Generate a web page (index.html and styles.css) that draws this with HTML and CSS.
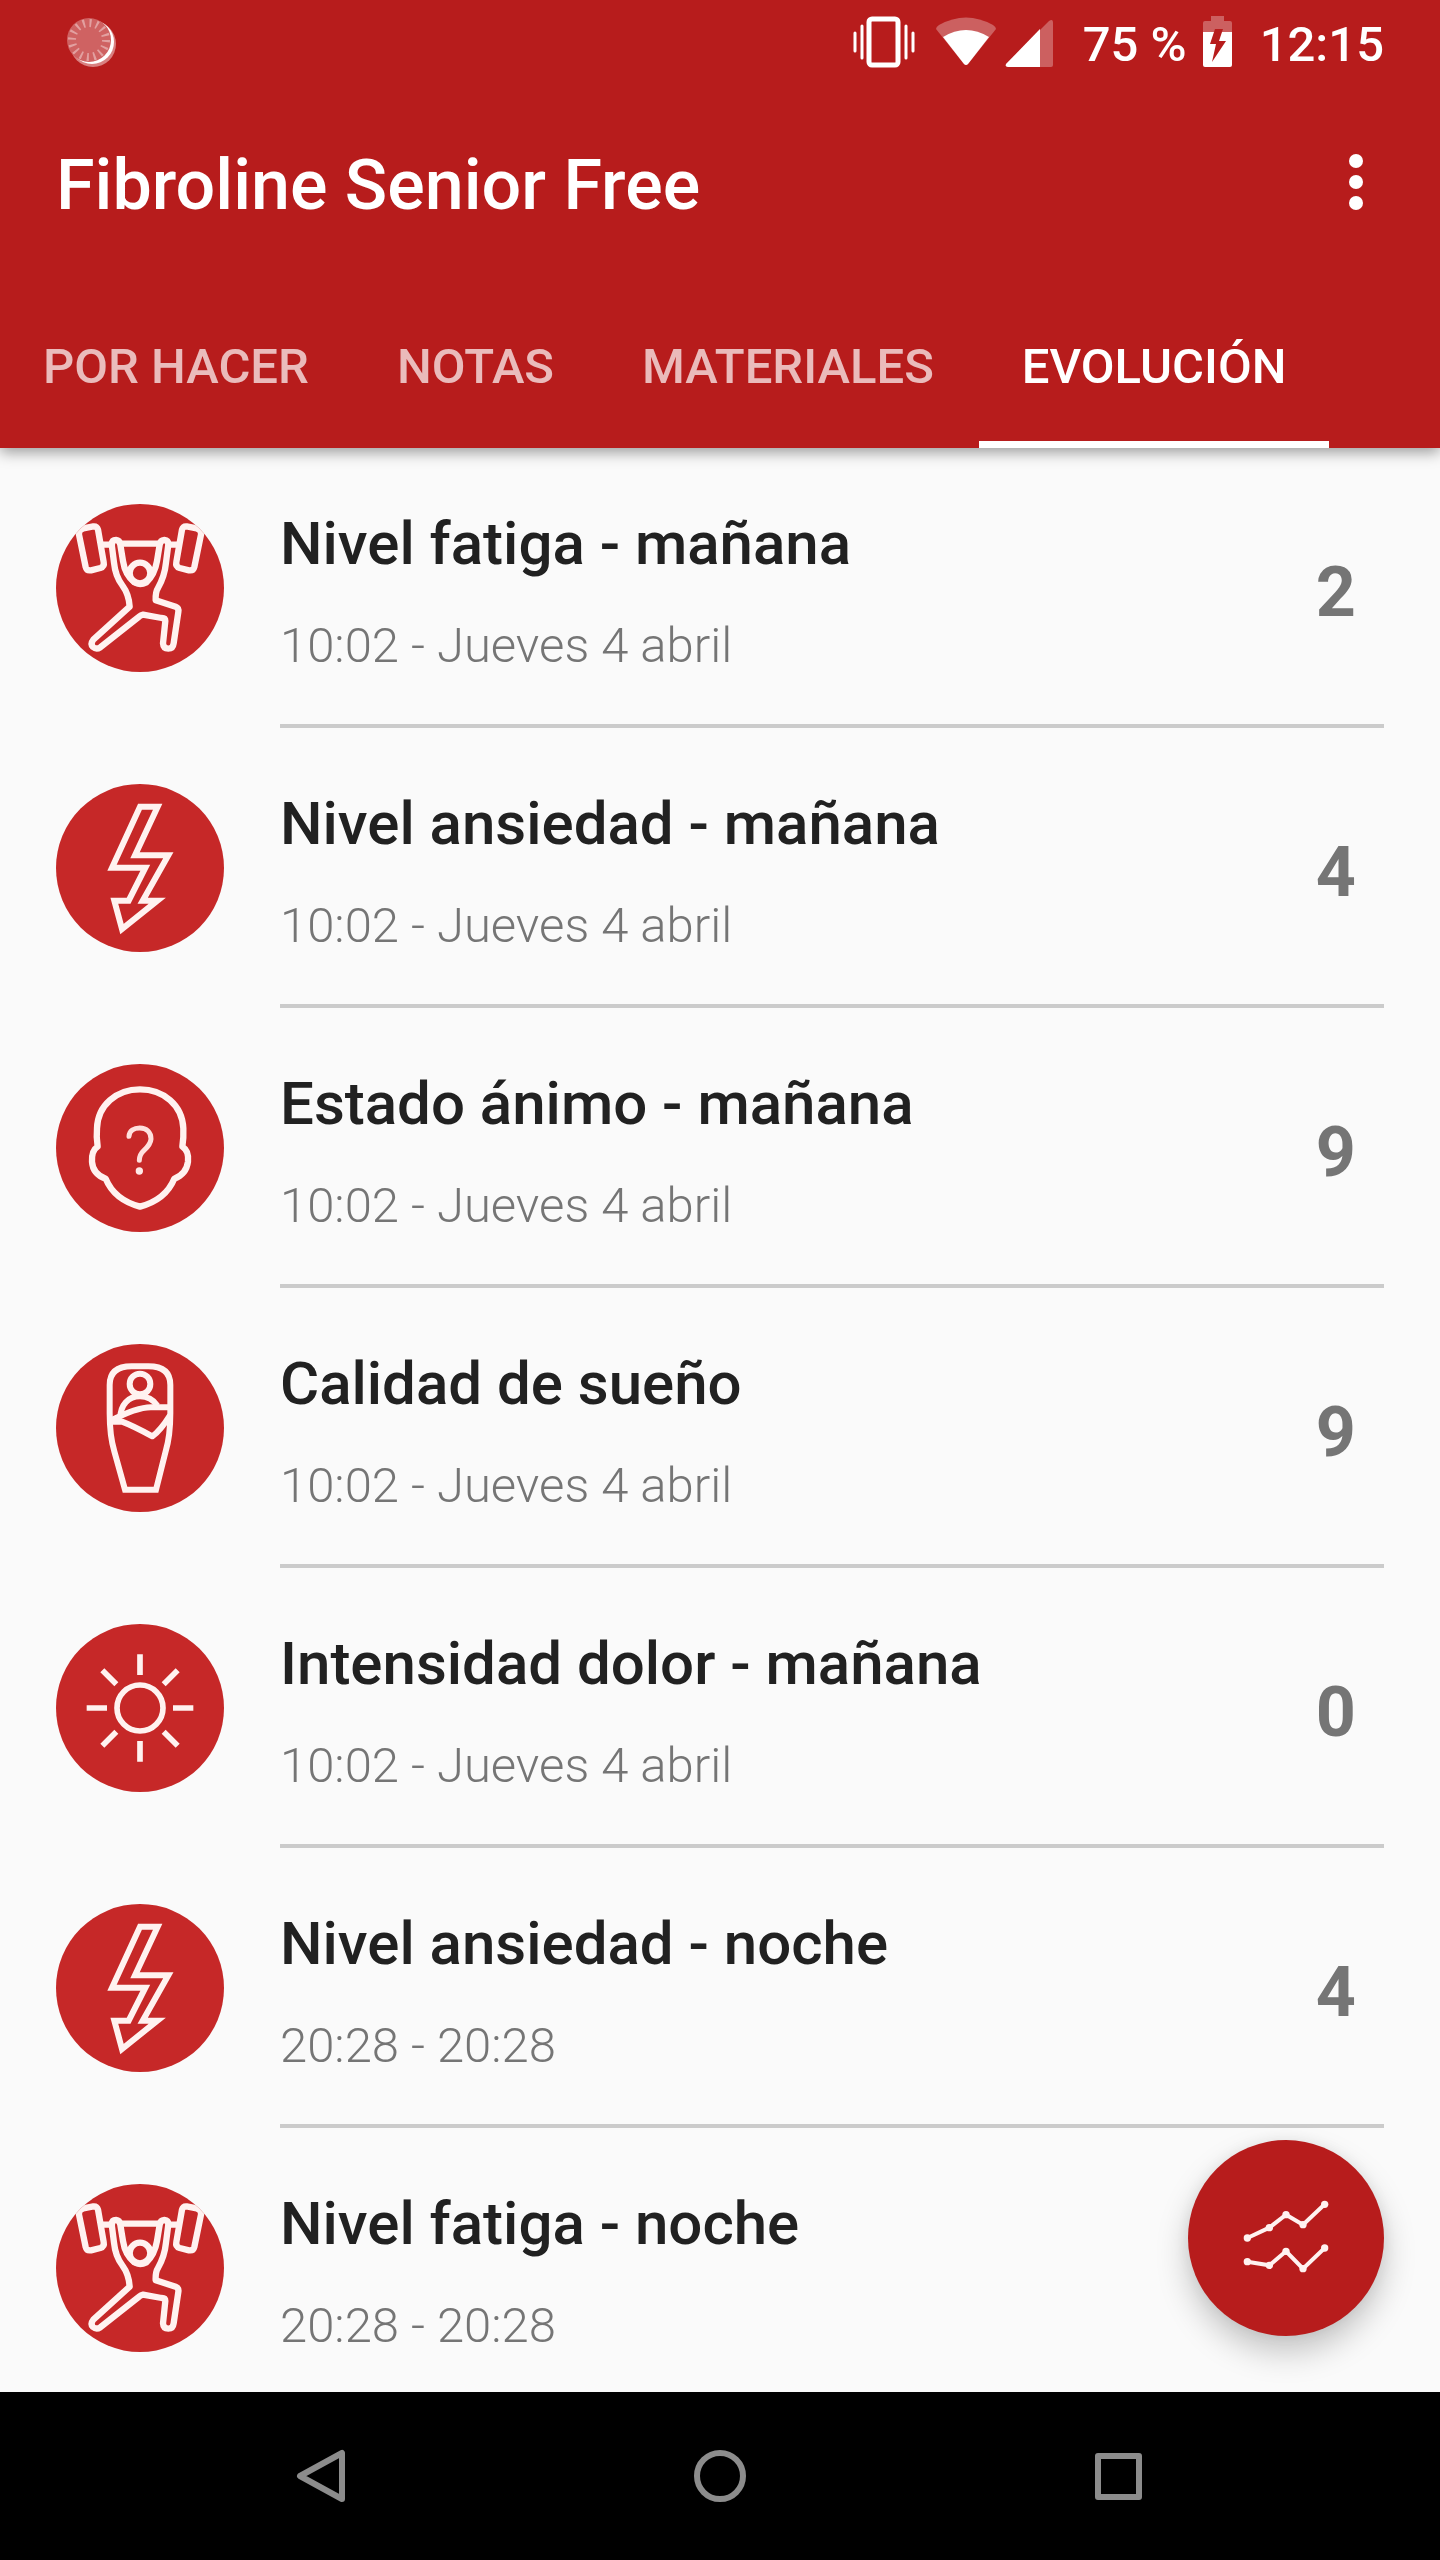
FILE: index.html
```html
<!DOCTYPE html>
<html lang="es">
<head>
<meta charset="utf-8">
<meta name="viewport" content="width=device-width, initial-scale=1">
<title>Fibroline Senior Free</title>
<link rel="stylesheet" href="styles.css">
</head>
<body>
<svg class="sprite" aria-hidden="true">
  <symbol id="i-fatiga" viewBox="48 42 504 504">
    <g fill="none" stroke="#fff2f0" stroke-width="19" stroke-linejoin="round" stroke-linecap="round">
      <path d="M130 115L160 109Q171 108 174 119L191 216Q194 230 181 234L153 241Q140 243 137 231L117 134Q114 119 130 115Z"/>
      <path d="M470 115L440 109Q429 108 426 119L409 216Q406 230 419 234L447 241Q460 243 463 231L483 134Q486 119 470 115Z"/>
      <path d="M190 164H216M245 161H356M386 164H412"/>
      <circle cx="300" cy="249" r="31"/>
      <path d="M269 350Q267 313 247 286Q226 259 222 218L215 163Q216 150 228 150Q239 151 241 164L249 213Q255 254 283 277Q300 287 319 277Q344 254 351 213L359 164Q361 151 373 150Q385 151 385 163L378 218Q374 259 354 294Q346 306 347 331L407 350Q417 354 415 366L401 460Q399 476 385 476Q370 476 369 460L376 393Q376 384 365 384L309 374Q303 375 297 380L181 472Q169 480 159 471Q150 462 160 449Z"/>
    </g>
  </symbol>
  <symbol id="i-ansiedad" viewBox="48 42 504 504">
    <path d="M300 110H353L285 256H385L308 392H352L246 477L223 392H266L316 293H216Z" fill="none" stroke="#fff2f0" stroke-width="18"/>
  </symbol>
  <symbol id="i-animo" viewBox="48 42 504 504">
    <path d="M173 290C170 270 169 255 171 235C173 165 230 118 300 118C370 118 427 165 430 235C431 255 430 270 427 290C440 298 446 315 444 335C440 365 425 378 403 386C385 430 345 458 300 470C255 458 215 430 197 386C175 378 158 365 156 335C155 315 160 298 173 290Z" fill="none" stroke="#fff2f0" stroke-width="19" stroke-linejoin="round"/>
    <path d="M267 259C268 242 282 234 299 234C320 234 333 247 333 267C332 282 322 292 312 301C301 311 298 318 298 331" fill="none" stroke="#ffe0de" stroke-width="15" stroke-linecap="round"/>
    <circle cx="298" cy="363" r="11" fill="#ffe9e7"/>
  </symbol>
  <symbol id="i-sueno" viewBox="48 42 504 504">
    <g fill="none" stroke="#fff2f0" stroke-width="18">
      <path d="M255 479L223 364Q209 318 209 250V165C209 125 235 109 275 109H325C365 109 391 125 391 165V250Q391 318 377 364L348 479Z"/>
      <circle cx="300" cy="162" r="31"/>
      <path d="M241 264C241 225 265 199 300 199C325 199 341 211 352 227"/>
      <path d="M210 273Q297 228 340 232H390M210 275H246Q278 287 337 319Q361 302 390 256" stroke-linejoin="round"/>
    </g>
  </symbol>
  <symbol id="i-dolor" viewBox="48 42 504 504">
    <g fill="none" stroke="#fff2f0" stroke-width="17">
      <circle cx="300" cy="294" r="69"/>
      <path d="M300 133V195M300 393V455M140 294H201M399 294H460M187 181L229 223M413 181L371 223M187 407L229 365M413 407L371 365"/>
    </g>
  </symbol>
</svg>

<header class="top">
  <div class="status">
    <svg class="status-sync" viewBox="0 0 50 50" aria-hidden="true">
      <circle cx="27" cy="27" r="23" fill="#d98080"/>
      <circle cx="26" cy="25" r="22" fill="#fff"/>
      <circle cx="23" cy="23" r="22" fill="#cf6262"/>
      <circle cx="23" cy="23" r="17" fill="none" stroke="#e2a0a0" stroke-width="8" stroke-dasharray="2 4.676"/>
    </svg>
    <div class="status-net">
      <svg width="62" height="52" viewBox="853 16 62 52" aria-label="Vibración">
        <rect x="869" y="19" width="29" height="46" rx="3" fill="none" stroke="#fff" stroke-width="5"/>
        <path d="M855 33V51M862 26V58M906 26V58M913 33V51" stroke="#fff" stroke-width="3" stroke-linecap="round"/>
      </svg>
      <span class="signals">
        <svg width="62" height="52" viewBox="935 16 62 52" aria-label="Wifi">
          <path d="M936 29Q936 27 939 25Q966 10 993 25Q996 27 996 29L968 64Q966 66 964 64Z" fill="#fff" fill-opacity=".3"/>
          <path d="M943 37Q966 23 989 37L968 64Q966 66 964 64Z" fill="#fff"/>
        </svg>
        <svg width="48" height="52" viewBox="1005 16 48 52" aria-label="Cobertura">
          <path d="M1006 64L1049 21Q1053 18 1053 23V65Q1053 67 1051 67H1008Q1005 67 1006 64Z" fill="#fff" fill-opacity=".3"/>
          <path d="M1006 64L1040 29V67H1008Q1005 67 1006 64Z" fill="#fff"/>
        </svg>
      </span>
    </div>
    <span>75 %</span>
    <svg width="29" height="52" viewBox="1203 16 29 52" aria-label="Cargando">
      <path d="M1211 16H1224V21H1230Q1232 21 1232 23V32H1203V23Q1203 21 1205 21H1211Z" fill="#fff" fill-opacity=".3"/>
      <path d="M1203 32H1232V65Q1232 67 1230 67H1205Q1203 67 1203 65Z" fill="#fff"/>
      <path d="M1215 29H1223L1219 41H1226L1212 62L1216 44H1210Z" fill="#b71c1c"/>
    </svg>
    <time class="clock">12:15</time>
  </div>
  <div class="appbar">
    <h1>Fibroline Senior Free</h1>
    <button class="more" type="button" aria-label="Más opciones">
      <svg width="14" height="56" viewBox="0 0 14 56"><g fill="#fff"><circle cx="7" cy="7" r="7"/><circle cx="7" cy="28" r="7"/><circle cx="7" cy="49" r="7"/></g></svg>
    </button>
  </div>
  <nav class="tabs">
    <button type="button">POR HACER</button>
    <button type="button">NOTAS</button>
    <button type="button">MATERIALES</button>
    <button type="button" class="active" aria-current="page">EVOLUCIÓN</button>
  </nav>
</header>

<main class="content">
  <ul class="list">
    <li><svg class="avatar"><use href="#i-fatiga"/></svg><div class="entry"><div class="text"><h2>Nivel fatiga - mañana</h2><p>10:02 - Jueves 4 abril</p></div><span class="value">2</span></div></li>
    <li><svg class="avatar"><use href="#i-ansiedad"/></svg><div class="entry"><div class="text"><h2>Nivel ansiedad - mañana</h2><p>10:02 - Jueves 4 abril</p></div><span class="value">4</span></div></li>
    <li><svg class="avatar"><use href="#i-animo"/></svg><div class="entry"><div class="text"><h2>Estado ánimo - mañana</h2><p>10:02 - Jueves 4 abril</p></div><span class="value">9</span></div></li>
    <li><svg class="avatar"><use href="#i-sueno"/></svg><div class="entry"><div class="text"><h2>Calidad de sueño</h2><p>10:02 - Jueves 4 abril</p></div><span class="value">9</span></div></li>
    <li><svg class="avatar"><use href="#i-dolor"/></svg><div class="entry"><div class="text"><h2>Intensidad dolor - mañana</h2><p>10:02 - Jueves 4 abril</p></div><span class="value">0</span></div></li>
    <li><svg class="avatar"><use href="#i-ansiedad"/></svg><div class="entry"><div class="text"><h2>Nivel ansiedad - noche</h2><p>20:28 - 20:28</p></div><span class="value">4</span></div></li>
    <li><svg class="avatar"><use href="#i-fatiga"/></svg><div class="entry"><div class="text"><h2>Nivel fatiga - noche</h2><p>20:28 - 20:28</p></div></div></li>
  </ul>
  <button class="fab" type="button" aria-label="Ver gráficas">
    <svg viewBox="84 90 588 588">
      <g fill="none" stroke="#fff2f0" stroke-width="12">
        <path d="M262 384L328 353L378 314L429 344L494 283M262 455L328 466L378 424L429 476L494 414"/>
      </g>
      <g fill="#fff2f0">
        <circle cx="262" cy="384" r="11"/><circle cx="328" cy="353" r="11"/><circle cx="378" cy="314" r="11"/><circle cx="429" cy="344" r="11"/><circle cx="494" cy="283" r="11"/>
        <circle cx="262" cy="455" r="11"/><circle cx="328" cy="466" r="11"/><circle cx="378" cy="424" r="11"/><circle cx="429" cy="476" r="11"/><circle cx="494" cy="414" r="11"/>
      </g>
    </svg>
  </button>
</main>

<footer class="navbar">
  <button type="button" aria-label="Atrás"><svg viewBox="0 0 56 56"><path d="M49 5V51L7 28Z"/></svg></button>
  <button type="button" aria-label="Inicio"><svg viewBox="0 0 56 56"><circle cx="28" cy="28" r="23"/></svg></button>
  <button type="button" aria-label="Recientes"><svg viewBox="0 0 56 56"><rect x="7" y="8" width="41" height="41"/></svg></button>
</footer>
</body>
</html>
```
FILE: styles.css
```css
* {
  box-sizing: border-box;
  margin: 0;
  padding: 0;
}

body {
  display: flex;
  flex-direction: column;
  height: 100vh;
  background: #fafafa;
  color: #212121;
  font-family: Roboto, "Liberation Sans", sans-serif;
}

button {
  border: 0;
  background: none;
  color: inherit;
  font: inherit;
  cursor: pointer;
}

svg {
  display: block;
  flex: none;
}

.sprite {
  position: absolute;
  width: 0;
  height: 0;
}

/* Header: status line, title bar, tabs */
.top {
  z-index: 1;
  background: #b71c1c;
  color: #fff;
  box-shadow: 0 4px 14px rgba(0, 0, 0, 0.4);
}

.status {
  display: flex;
  align-items: center;
  height: 84px;
  padding: 0 56px;
  gap: 16px;
  font-size: 49px;
  font-weight: 500;
  line-height: 56px;
}

.status-sync {
  width: 50px;
  height: 50px;
  margin-left: 10px;
}

.status-net {
  display: flex;
  gap: 20px;
  margin-left: auto;
  padding-right: 14px;
}

.signals {
  display: flex;
  gap: 8px;
}

.status > span,
.clock {
  padding-top: 6px;
}

.clock {
  padding-left: 12px;
}

.appbar {
  display: flex;
  align-items: center;
  justify-content: space-between;
  height: 196px;
  padding: 0 14px 0 56px;
}

h1 {
  padding-top: 6px;
  font-size: 70px;
  font-weight: 500;
  line-height: 82px;
}

.more {
  display: grid;
  place-items: center;
  width: 140px;
  height: 140px;
}

.tabs {
  display: flex;
  gap: 2px;
  height: 168px;
}

.tabs button {
  padding: 11px 43px 0;
  border-bottom: 7px solid transparent;
  color: rgba(255, 255, 255, 0.7);
  font-size: 49px;
  font-weight: 500;
  white-space: nowrap;
}

.tabs .active {
  border-color: #fff;
  color: #fff;
}

/* Scrolling list with the floating button above it */
.content {
  position: relative;
  flex: 1;
  min-height: 0;
}

.list {
  height: 100%;
  overflow-y: auto;
  scrollbar-width: none;
  list-style: none;
}

.list li {
  display: flex;
  gap: 56px;
  height: 280px;
  padding: 0 56px;
}

.avatar {
  width: 168px;
  height: 168px;
  margin-top: 56px;
  border-radius: 50%;
  background: #c62828;
}

.entry {
  display: flex;
  flex: 1;
  align-items: center;
  justify-content: space-between;
  min-width: 0;
  padding: 12px 28px 0 0;
  border-bottom: 4px solid #cbcbcb;
}

.text {
  display: grid;
  gap: 38px;
}

h2 {
  font-size: 60px;
  font-weight: 500;
  line-height: 70px;
}

.text p {
  color: #757575;
  font-size: 49px;
  font-weight: 300;
  line-height: 58px;
}

.value {
  color: #757575;
  font-size: 70px;
  font-weight: 700;
  line-height: 82px;
}

.fab {
  position: absolute;
  right: 56px;
  bottom: 56px;
  width: 196px;
  height: 196px;
  border-radius: 50%;
  background: #b71c1c;
  box-shadow: 0 16px 32px rgba(0, 0, 0, 0.22), 0 0 14px rgba(0, 0, 0, 0.06);
}

/* System navigation */
.navbar {
  display: flex;
  flex: none;
  height: 168px;
  padding: 0 122px;
  background: #000;
}

.navbar button {
  display: grid;
  flex: 1;
  place-items: center;
}

.navbar svg {
  width: 56px;
  height: 56px;
  fill: none;
  stroke: #8c8c8c;
  stroke-width: 6;
  stroke-linejoin: round;
}
```
